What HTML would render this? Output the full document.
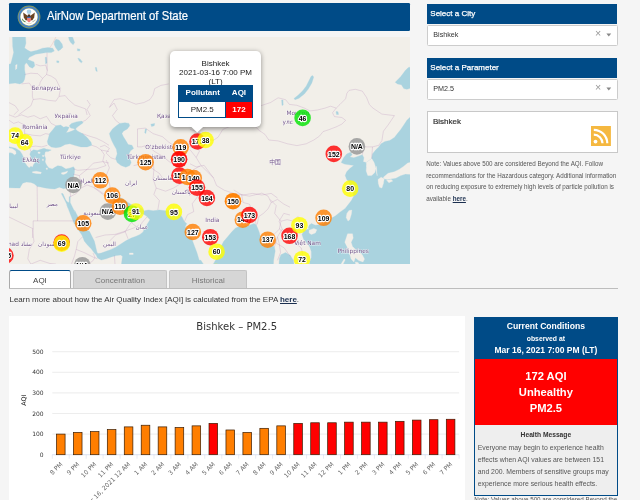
<!DOCTYPE html>
<html><head><meta charset="utf-8"><title>AirNow Department of State</title>
<style>
html,body{margin:0;padding:0;}
html{background:#f5f5f5;}
body{width:640px;height:500px;overflow:hidden;background:#f5f5f5;font-family:"Liberation Sans",sans-serif;color:#333;position:relative;filter:blur(0.35px);}
.abs{position:absolute;}
#hdr{left:9.2px;top:3px;width:400.6px;height:28.2px;background:#004b87;border-radius:1.3px;}
#hdr .t{left:37.6px;top:4.9px;font-size:12.2px;color:#fff;white-space:nowrap;line-height:16px;-webkit-text-stroke:0.2px #fff;transform:scaleX(0.93);transform-origin:0 0;}
#map{left:9px;top:37px;width:401px;height:227px;background:#f2efe9;overflow:hidden;}
.bar{left:426.8px;width:190.6px;height:20px;background:#004b87;color:#fff;font-size:8px;line-height:20px;text-indent:3.5px;-webkit-text-stroke:0.25px #fff;}
.dd{left:426.8px;width:189.6px;height:19px;background:#fff;border:0.5px solid #ccc;border-radius:1.5px;font-size:7.2px;line-height:17.4px;text-indent:5.5px;color:#333;}
.dd .x{right:16.3px;top:-1.3px;font-size:10.6px;color:#999;text-indent:0;}
.dd .a{right:6.3px;top:7.2px;width:0;height:0;border-left:2.4px solid transparent;border-right:2.4px solid transparent;border-top:2.9px solid #888;}
#rss{left:426.8px;top:111px;width:189.6px;height:40px;background:#fff;border:0.5px solid #c8c8c8;}
#rss .n{left:5.2px;top:5.4px;font-size:8px;line-height:10px;color:#333;-webkit-text-stroke:0.2px #333;}
#note{left:426.2px;top:158.4px;width:196px;font-size:6.28px;line-height:11.45px;color:#555;white-space:nowrap;}
#note b, #learn b{color:#1b2f4f;text-decoration:underline;}
.tab{top:270px;height:17.5px;font-size:8px;line-height:19.5px;text-align:center;box-sizing:border-box;}
#t1{left:9.3px;width:61.3px;background:#fff;border:0.5px solid #aaa;border-top:1px solid #004b87;border-bottom:none;border-radius:2.5px 2.5px 0 0;color:#444;height:18px;}
#t2{left:72.7px;width:94.5px;background:#d6d6d6;border:0.5px solid #c4c4c4;border-bottom:none;border-radius:2px 2px 0 0;color:#777;}
#t3{left:169.3px;width:78px;background:#d6d6d6;border:0.5px solid #c4c4c4;border-bottom:none;border-radius:2px 2px 0 0;color:#777;}
#tline{left:9.3px;top:287.7px;width:608.5px;height:0.8px;background:#bdbdbd;}
#learn{left:9.5px;top:294.5px;font-size:7.98px;line-height:10px;color:#333;white-space:nowrap;}
#chart{left:9.3px;top:316.4px;width:455.7px;height:190px;background:#fff;}
#cond{left:474.2px;top:316.5px;width:143.4px;height:179.3px;box-sizing:border-box;border:0.6px solid #004b87;background:#eee;}
#cond .h{left:0;top:0;width:100%;height:42px;background:#004b87;color:#fff;text-align:center;font-weight:bold;}
#cond .r{left:0;top:41.8px;width:100%;height:65.7px;background:#ff0000;color:#fff;text-align:center;font-weight:bold;font-size:11.2px;line-height:16.2px;}
#cond .m{left:0;top:107px;width:100%;color:#444;}
#cnote{left:474.2px;top:495.6px;font-size:6.28px;line-height:8px;color:#555;white-space:nowrap;}
</style></head><body>
<div id="hdr" class="abs"><svg class="abs" style="left:8.1px;top:2.4px" width="24" height="24" viewBox="-12 -12 24 24">
<circle r="11.4" fill="#8a9a5a"/><circle r="10.6" fill="#4580c8"/><circle r="8.9" fill="#a8b070"/><circle r="8.5" fill="#fff"/>
<circle cx="0" cy="-5.2" r="2.3" fill="#a9cfe6"/>
<path d="M-1 -1 L-5.8 -4.4 L-5.2 0.4 L-3.4 3.2 L-1.2 3.6Z" fill="#6b4423"/>
<path d="M1 -1 L5.8 -4.4 L5.2 0.4 L3.4 3.2 L1.2 3.6Z" fill="#6b4423"/>
<path d="M-1.1 -2.4 L1.1 -2.4 L1.4 0 L-1.4 0Z" fill="#4a3220"/>
<path d="M-1.9 -0.2 H1.9 V1 H-1.9Z" fill="#3b6fb5"/>
<path d="M-1.9 1 H1.9 V3 Q1.9 4.8 0 5.4 Q-1.9 4.8 -1.9 3Z" fill="#ee7b7b"/>
<path d="M-6.6 1.4 Q-5.6 3.6 -3.2 4.6 L-3.8 5.6 Q-6.6 4.6 -7.2 2Z" fill="#5f8a4a"/>
<path d="M3.2 4.6 L6.4 2.4 L6.8 3 L3.8 5.4Z" fill="#b9b9a0"/>
<path d="M-3 5.2 Q0 7.6 3 5.2 L2.4 6.6 Q0 8 -2.4 6.6Z" fill="#d8cfa8"/>
</svg><div class="t abs">AirNow Department of State</div></div>
<div id="map" class="abs"><svg class="abs" style="left:0;top:0" width="401" height="227" viewBox="0 0 401 227">
<rect width="401" height="227" fill="#f2efe9"/>
<g fill="#aad3df" stroke="#aad3df" stroke-width="0.3" stroke-linejoin="round">
<path d="M-1.6 -1.6 L16.4 -1.6 L16.9 6.2 L15.6 10.9 L18.8 13.3 L21.9 14.8 L28.1 13.3 L33.6 11.2 L39.1 10.6 L43.8 11.2 L45.3 14.1 L42.2 15.6 L37.5 15.6 L31.2 16.4 L26.6 17.2 L23.4 18.8 L20.3 20.3 L18.8 22.7 L21.1 23.4 L25.0 25.0 L25.8 28.9 L23.4 31.2 L20.3 29.7 L18.8 27.3 L17.2 25.8 L15.6 28.1 L15.6 32.8 L16.4 37.5 L15.6 42.2 L14.1 45.3 L10.9 46.9 L6.2 46.1 L-1.6 46.9Z"/>
<path d="M45.3 4.7 L46.9 2.3 L50.0 3.1 L53.1 7.0 L53.9 10.2 L51.6 12.5 L49.2 14.1 L46.9 10.9 L45.3 7.8Z"/>
<path d="M59.4 -0.8 L63.3 -0.8 L65.6 5.5 L64.1 7.8 L61.7 5.5 L60.2 3.1Z"/>
<path d="M36.2 20.3 L37.5 20.3 L38.0 25.8 L36.6 26.9Z"/>
<path d="M68.3 11.7 L71.1 12.2 L70.6 14.1 L68.4 13.8Z"/>
<path d="M68.8 21.1 L71.1 21.9 L73.4 25.0 L72.2 25.8 L70.0 23.8Z"/>
<path d="M47.7 23.8 L50.0 24.1 L49.7 25.8 L47.8 25.5Z"/>
<path d="M86.2 30.5 L87.5 30.5 L88.3 34.4 L87.0 34.1Z"/>
<path d="M39.1 102.1 L40.6 96.6 L43.8 92.7 L46.9 88.8 L51.6 88.0 L54.7 90.3 L57.0 89.6 L60.2 90.3 L58.6 93.5 L57.0 95.8 L60.2 95.0 L64.1 93.5 L66.4 91.9 L68.8 94.2 L73.4 96.6 L78.1 100.5 L82.0 105.2 L82.8 108.3 L78.1 109.9 L71.9 109.9 L65.6 108.3 L60.9 106.8 L56.2 107.5 L51.6 109.9 L46.9 110.7 L42.2 109.9 L39.1 107.5 L38.3 104.4Z"/>
<path d="M60.2 88.8 L62.5 86.4 L67.2 84.9 L72.7 84.1 L74.2 85.7 L71.1 88.0 L68.0 90.3 L66.4 92.2 L64.1 91.4 L61.7 91.1Z"/>
<path d="M35.2 113.0 L38.3 112.2 L42.2 113.0 L39.1 114.6 L35.9 114.6Z"/>
<path d="M-1.1 109.6 L6.6 111.2 L10.9 113.9 L13.1 117.2 L14.8 121.0 L15.3 124.9 L18.0 128.7 L20.2 130.9 L21.9 129.2 L23.5 130.3 L24.6 127.6 L26.2 125.4 L23.5 123.8 L22.4 121.0 L20.8 117.2 L21.9 114.5 L24.6 112.8 L28.4 113.4 L31.7 112.3 L35.0 111.2 L37.7 112.3 L36.1 115.0 L35.5 118.3 L36.6 121.6 L36.1 124.9 L37.7 128.2 L39.9 130.9 L43.2 132.0 L45.9 130.3 L48.7 128.7 L52.5 129.2 L56.9 132.0 L61.2 130.9 L64.5 129.8 L65.6 131.4 L65.4 135.8 L64.5 140.2 L63.4 144.6 L61.8 147.8 L58.5 150.8 L54.7 151.7 L50.3 150.2 L45.9 152.0 L41.6 151.7 L36.1 150.9 L31.7 150.0 L28.4 149.5 L25.2 146.8 L21.9 145.4 L17.5 145.1 L13.7 146.2 L12.0 148.9 L10.9 151.1 L6.6 150.9 L-1.1 150.6Z"/>
<path d="M52.3 156.6 L53.9 156.6 L57.0 163.6 L59.1 165.5 L60.2 165.2 L60.2 159.7 L61.2 159.7 L61.2 165.5 L64.1 171.4 L66.4 176.1 L65.6 173.3 L68.8 179.6 L73.4 185.8 L78.1 193.6 L80.4 194.2 L82.9 199.2 L85.4 204.2 L86.6 209.2 L87.9 214.9 L89.1 217.0 L87.2 218.0 L85.4 216.1 L82.2 211.8 L78.5 208.0 L75.4 204.2 L72.9 198.0 L68.8 192.1 L64.8 185.8 L61.7 178.0 L57.8 167.8 L59.4 171.4 L57.8 167.5 L56.2 163.9Z"/>
<path d="M100.4 96.6 L103.5 91.9 L107.4 88.8 L110.5 86.4 L116.0 85.7 L119.9 86.4 L120.7 88.8 L118.3 91.9 L114.4 94.2 L112.9 96.6 L114.4 99.7 L116.8 103.6 L119.1 107.5 L123.0 108.3 L124.6 111.4 L121.5 113.8 L119.9 116.9 L120.7 121.6 L122.2 125.5 L120.7 128.6 L116.8 130.2 L112.1 128.6 L108.2 125.5 L106.6 121.6 L108.2 116.9 L107.4 112.2 L105.1 108.3 L102.7 103.6 L101.2 99.7Z"/>
<path d="M141.8 87.2 L145.7 86.4 L145.2 88.8 L142.6 89.6Z"/>
<path d="M136.3 91.9 L137.6 91.9 L136.8 96.6 L135.7 95.8Z"/>
<path d="M101.9 155.0 L105.8 156.6 L111.3 160.5 L116.0 163.6 L122.2 167.5 L128.5 169.9 L133.2 171.4 L135.5 174.6 L133.2 176.9 L130.1 177.7 L126.2 180.0 L121.5 181.6 L116.8 179.2 L114.4 175.3 L112.1 170.7 L109.0 166.0 L105.1 162.1 L101.9 158.2Z"/>
<path d="M134.8 175.8 L135.5 173.8 L139.4 173.0 L144.1 173.8 L150.4 173.0 L156.6 173.8 L162.9 173.0 L169.1 174.6 L173.0 180.0 L175.4 184.7 L177.7 186.6 L176.2 189.7 L178.5 192.1 L180.8 196.8 L183.2 203.0 L185.5 209.2 L187.9 215.5 L190.2 223.3 L191.9 223.3 L194.3 227.1 L198.2 229.6 L204.4 227.1 L206.0 224.1 L209.1 220.2 L210.7 215.5 L212.2 209.2 L214.6 204.6 L218.5 199.9 L222.4 195.2 L226.3 191.3 L229.4 189.7 L234.1 189.7 L240.4 188.2 L245.1 186.6 L247.4 188.2 L249.0 192.1 L250.5 196.0 L251.3 199.9 L252.9 204.6 L257.6 206.9 L262.2 207.7 L265.4 210.0 L266.2 213.9 L265.4 218.6 L264.6 223.3 L264.1 234.2 L112.2 229.2 L112.9 223.6 L113.5 219.2 L111.6 218.0 L107.2 218.6 L102.2 219.9 L97.2 221.8 L92.2 223.0 L88.5 221.1 L87.2 218.0 L88.5 216.8 L92.2 216.1 L97.2 214.2 L102.2 212.4 L107.2 209.9 L112.2 206.8 L117.2 203.6 L122.2 201.1 L127.2 199.2 L131.0 197.4 L134.1 194.9 L135.4 191.8 L141.0 182.7 L137.1 178.8 L133.2 176.4Z"/>
<path d="M269.6 234.2 L270.4 221.8 L271.9 217.8 L276.6 215.5 L281.3 218.6 L284.4 223.3 L286.0 234.2Z"/>
<path d="M410.4 72.4 L401.0 80.2 L397.9 83.3 L394.8 88.0 L391.6 92.7 L388.5 96.6 L385.4 100.5 L380.7 103.6 L376.0 104.4 L372.1 106.8 L369.8 109.9 L366.6 113.0 L363.5 116.9 L362.7 121.6 L360.4 123.2 L357.2 125.5 L354.1 124.7 L354.9 120.8 L353.3 117.7 L349.4 119.2 L344.8 120.8 L340.8 120.0 L343.2 117.7 L341.6 115.3 L337.7 116.9 L334.6 120.8 L332.2 125.5 L335.4 127.1 L340.1 127.8 L345.5 128.6 L344.8 128.5 L340.8 131.6 L337.7 134.7 L336.2 138.6 L337.7 142.5 L340.1 144.9 L342.4 151.9 L344.8 158.9 L342.4 163.6 L339.3 167.5 L336.2 171.4 L331.3 174.9 L326.6 178.8 L322.7 181.1 L320.4 183.5 L312.6 187.4 L306.3 188.2 L302.4 186.6 L300.1 188.2 L299.3 191.3 L300.8 192.1 L296.9 192.8 L294.6 194.4 L293.0 197.5 L294.6 202.2 L297.7 206.1 L300.8 210.0 L302.4 214.7 L302.4 220.2 L300.8 224.9 L298.5 234.2 L411.0 234.2Z"/>
<path d="M386.2 45.3 L391.6 39.8 L396.3 33.6 L399.4 30.5 L410.4 28.1 L410.4 48.4 L397.9 52.3 L394.8 51.6 L392.4 47.7 L388.5 46.9Z"/>
<path d="M303.5 38.5 L304.7 40.0 L302.8 46.0 L299.3 52.0 L295.3 57.0 L290.0 61.2 L286.0 62.7 L285.0 61.5 L289.0 58.3 L293.7 53.8 L297.3 49.0 L300.3 43.0 L302.0 39.5Z"/>
<path d="M272.6 63.0 L274.0 63.0 L274.2 68.0 L273.0 68.5Z"/>
<path d="M327.0 74.5 L329.0 74.8 L329.5 77.5 L327.5 77.5Z"/>
</g>
<g fill="#f2efe9" stroke="#f2efe9" stroke-width="0.3" stroke-linejoin="round">
<path d="M3.1 -1.6 L3.4 9.4 L4.4 15.6 L2.8 21.9 L1.6 26.6 L-1.6 27.3 L-1.6 -1.6Z"/>
<path d="M6.6 28.1 L8.1 27.5 L7.8 31.2 L6.6 32.8Z"/>
<path d="M23.5 134.7 L27.3 134.2 L32.3 135.3 L31.9 136.7 L27.3 136.4 L23.5 135.8Z"/>
<path d="M52.5 135.8 L56.3 134.9 L58.7 134.1 L57.8 136.0 L54.7 137.5 L52.5 137.1Z"/>
<path d="M37.2 130.9 L38.5 130.9 L38.3 132.5 L37.2 132.3Z"/>
<path d="M33.4 118.3 L35.2 118.5 L35.0 119.6 L33.5 119.4Z"/>
<path d="M33.4 122.1 L34.5 122.2 L34.3 123.8 L33.5 123.6Z"/>
<path d="M29.0 115.0 L31.2 115.2 L31.0 116.6 L29.1 116.3Z"/>
<path d="M26.8 121.0 L28.7 122.7 L28.2 123.8 L26.2 122.2Z"/>
<path d="M-1.1 110.7 L3.3 111.8 L6.6 113.9 L7.1 116.7 L5.5 117.8 L3.3 116.1 L1.1 115.6 L-1.1 116.1Z"/>
<path d="M120.4 216.1 L124.1 216.0 L124.2 217.4 L120.5 217.5Z"/>
<path d="M362.7 121.6 L365.1 125.5 L366.6 130.2 L367.4 134.9 L368.2 138.8 L367.4 129.2 L365.8 135.5 L362.7 138.6 L358.8 138.6 L357.2 133.9 L357.6 127.7 L358.0 130.2 L357.2 125.5 L360.4 123.2Z"/>
<path d="M369.0 142.5 L372.1 140.2 L375.2 141.8 L374.4 146.4 L372.9 151.1 L370.5 150.3 L369.4 146.4Z"/>
<path d="M374.4 140.2 L379.1 136.3 L385.4 134.7 L390.1 132.4 L394.8 129.2 L398.7 126.1 L410.4 123.0 L410.4 137.8 L396.3 137.1 L391.6 138.6 L386.9 141.0 L382.2 141.8 L378.3 142.5 L375.2 141.8Z"/>
<path d="M377.6 143.3 L382.2 142.5 L383.8 144.1 L379.9 145.7Z"/>
<path d="M340.0 173.5 L342.8 173.1 L342.4 177.1 L340.7 182.7 L339.0 184.1 L337.2 180.6 L337.9 176.4Z"/>
<path d="M300.1 193.2 L304.8 191.4 L307.9 192.8 L306.3 196.0 L302.4 197.5 L300.1 196.0Z"/>
<path d="M338.6 196.8 L343.5 196.8 L344.2 201.0 L342.1 205.2 L343.5 209.4 L345.6 211.5 L353.3 217.8 L355.5 222.1 L354.0 224.9 L349.8 223.5 L346.3 220.7 L344.9 224.9 L342.1 222.1 L340.0 215.0 L337.9 209.4 L335.8 205.2 L337.2 201.0Z"/>
<path d="M330.8 229.1 L335.1 222.1 L336.2 222.8 L333.0 229.1Z"/>
<path d="M346.3 224.9 L349.1 225.6 L351.2 229.1 L347.0 229.1Z"/>
</g>
<g fill="none" stroke="#a46aa8" stroke-opacity="0.42" stroke-width="0.5" stroke-linejoin="round">
<path d="M15.6 37.5 L21.9 36.2 L28.9 36.7 L33.6 41.4 L31.2 45.3 L30.5 48.4"/>
<path d="M26.6 27.3 L31.2 28.9 L36.7 28.1 L38.3 33.6 L37.5 37.5 L33.6 41.4"/>
<path d="M37.5 37.5 L42.2 39.1 L46.9 42.2 L49.2 46.9 L51.6 51.6 L50.0 59.4 L56.2 58.6 L59.4 62.5 L65.6 68.0 L76.6 71.9 L78.1 78.0"/>
<path d="M30.5 48.4 L23.4 52.3 L23.4 59.4 L24.2 62.5 L31.2 61.7 L39.1 63.3 L46.9 64.1 L50.0 59.4"/>
<path d="M12.5 46.9 L20.3 46.1 L21.9 48.4 L23.4 52.3"/>
<path d="M38.0 15.6 L38.0 25.8 L38.3 33.6"/>
<path d="M24.2 62.5 L21.9 68.8 L15.6 73.4 L9.4 78.0"/>
<path d="M0.0 65.6 L6.2 68.8 L9.4 73.4 L4.7 78.0"/>
<path stroke="#d88"  d="M46.9 0.0 L43.8 6.2 L40.9 10.6"/>
<path d="M0.0 77.8 L6.2 80.2 L12.5 77.8 L18.8 80.2 L25.0 78.6 L31.2 81.8 L37.5 79.4 L42.2 86.4 L46.9 88.8"/>
<path d="M15.6 96.6 L23.4 98.2 L31.2 98.9 L36.7 96.6 L40.3 97.4"/>
<path d="M20.3 109.9 L26.6 109.1 L32.8 109.9 L38.3 108.3"/>
<path d="M0.0 83.3 L4.7 86.4 L9.4 84.9 L15.6 88.0 L15.6 96.6 L12.5 102.1 L15.6 108.3 L20.3 109.9 L21.9 114.6"/>
<path d="M0.0 94.2 L6.2 96.6 L12.5 102.1"/>
<path d="M78.1 63.0 L81.2 67.7 L78.1 72.4 L81.2 78.6 L76.6 83.3 L73.4 84.6"/>
<path d="M73.4 96.6 L79.7 98.9 L87.5 101.3 L93.8 104.4 L100.0 108.3"/>
<path d="M82.8 108.3 L87.5 109.9 L92.2 113.0 L95.3 117.7 L93.8 123.9 L96.9 128.6 L87.5 131.8 L78.1 132.5 L68.8 133.3 L64.1 131.8"/>
<path d="M92.2 113.0 L100.0 114.6"/>
<path d="M100.4 70.3 L105.1 62.5 L111.3 61.7 L119.1 64.1 L126.9 67.2 L134.8 65.6 L141.0 62.5 L144.1 57.8 L145.7 51.6 L151.9 48.4 L159.8 46.9"/>
<path d="M100.4 70.3 L105.1 66.1 L108.2 72.4 L103.5 78.6 L106.6 83.3 L110.5 86.4"/>
<path d="M128.5 91.9 L128.5 109.9 L132.4 109.9"/>
<path d="M128.5 91.9 L136.3 91.1 L144.1 96.6 L153.5 99.7 L159.8 105.2 L164.4 108.3 L172.2 105.2 L178.5 108.3 L184.8 102.1"/>
<path d="M132.4 109.9 L137.9 108.3 L145.7 114.6 L153.5 119.2 L161.3 125.5 L166.0 128.6 L172.2 130.2"/>
<path d="M124.6 128.6 L131.6 127.1 L139.4 128.6 L145.7 133.3 L150.4 136.4 L153.5 141.0"/>
<path d="M91.0 109.9 L95.7 108.3 L100.4 111.4 L97.2 116.1 L101.9 120.8 L106.6 122.4"/>
<path d="M178.5 108.3 L184.8 111.4 L191.0 109.9"/>
<path d="M144.1 123.0 L144.9 132.4 L144.1 141.8 L147.2 151.1 L144.9 157.4 L150.4 163.6 L148.8 173.0"/>
<path d="M147.2 151.1 L156.6 154.2 L164.4 151.1 L172.2 146.4 L178.5 138.6 L184.8 132.4 L191.0 129.2"/>
<path d="M175.4 184.7 L178.5 177.7 L184.8 174.6 L183.2 166.8 L187.9 160.5 L191.0 154.2"/>
<path d="M101.9 155.0 L100.4 146.4 L97.2 138.6 L100.4 130.8 L97.2 123.0"/>
<path d="M84.8 150.3 L91.0 154.2 L97.2 158.9 L102.7 159.7"/>
<path d="M122.2 185.5 L130.1 191.8 L133.2 185.5 L137.9 180.0"/>
<path d="M122.2 185.5 L116.0 194.9 L106.6 198.0 L100.4 204.2"/>
<path d="M28.1 148.8 L28.6 183.9"/>
<path d="M28.6 183.9 L65.6 183.9"/>
<path d="M28.6 183.9 L24.2 183.9 L24.2 191.8 L0.0 180.0"/>
<path d="M24.2 191.8 L23.4 201.0"/>
<path d="M60.2 148.0 L61.7 159.7"/>
<path d="M64.1 137.1 L70.3 138.6 L78.1 132.4 L84.4 126.1 L93.8 124.6 L100.0 126.1"/>
<path d="M61.2 159.7 L67.2 156.6 L71.9 151.1 L78.1 148.0 L84.4 150.3 L93.8 157.4"/>
<path d="M70.3 138.6 L71.9 144.9 L67.2 148.0 L61.7 148.8"/>
<path d="M23.4 192.1 L25.0 204.6 L20.3 212.4 L18.8 221.8 L21.9 227.1"/>
<path d="M73.4 199.9 L68.8 204.6 L67.2 212.4 L65.6 218.6 L62.5 227.1"/>
<path d="M67.2 212.4 L75.0 215.5 L84.4 220.2 L88.3 221.8"/>
<path d="M21.9 227.1 L31.2 223.3 L40.6 226.4 L46.9 227.1"/>
<path d="M86.6 200.5 L96.0 198.0 L106.0 197.4 L116.0 194.2 L126.0 190.5 L129.8 188.0"/>
<path d="M116.0 194.2 L119.1 201.8"/>
<path d="M105.4 218.6 L106.0 227.0"/>
<path d="M84.1 216.1 L86.0 220.5 L83.5 224.2 L78.5 227.0"/>
<path d="M181.0 92.4 L190.4 95.5 L195.1 100.2 L204.4 103.3 L209.1 100.2 L213.8 92.4 L221.6 89.2 L227.9 86.1 L234.1 83.0"/>
<path d="M181.0 112.7 L187.2 120.5 L191.9 128.3 L198.2 134.6 L204.4 140.8 L207.6 148.6 L215.4 153.3 L224.8 156.4 L234.1 158.0 L243.5 156.4 L252.9 158.0 L262.2 156.4 L268.5 161.0"/>
<path d="M181.0 126.8 L187.2 129.9 L195.1 128.3 L204.4 140.8"/>
<path d="M187.2 120.5 L190.4 114.2 L187.2 108.0 L191.9 103.3 L195.1 100.2"/>
<path d="M224.8 153.0 L232.6 157.7 L240.4 159.2 L246.6 157.7 L252.9 156.1 L259.1 159.2 L262.2 165.5 L259.1 171.8 L254.4 176.4 L249.8 179.6 L248.2 187.4"/>
<path d="M232.6 157.7 L234.1 165.5 L240.4 167.1 L243.5 173.3 L247.4 188.2"/>
<path d="M262.2 165.5 L268.5 162.4 L274.8 167.1 L281.0 170.2"/>
<path d="M265.4 210.0 L268.5 199.9 L273.2 192.1 L270.1 184.2 L274.8 176.4 L281.0 178.0"/>
<path d="M273.2 192.1 L277.9 196.8 L281.0 204.6"/>
<path d="M268.5 223.3 L271.6 215.5 L270.1 206.1 L268.5 199.9"/>
<path d="M363.5 70.8 L372.9 77.1 L385.4 78.6 L379.1 88.0 L374.4 94.2 L372.9 103.6 L369.8 108.3 L363.5 109.9 L355.7 109.9"/>
<path d="M355.7 109.9 L354.1 114.6 L353.3 117.7"/>
<path d="M363.5 109.9 L362.7 121.6"/>
<path d="M229.8 74.9 L241.0 71.1 L253.2 68.3 L261.6 65.5 L269.1 60.8 L276.6 62.7 L280.4 67.4 L287.9 68.3 L295.4 71.1 L301.0 73.9 L308.5 73.0 L316.0 71.1 L321.6 69.2 L327.2 71.1"/>
<path d="M327.2 71.1 L323.5 75.8 L325.4 79.6 L332.9 80.5 L336.6 83.3 L332.9 87.1 L327.2 89.9 L319.8 92.7 L314.1 94.6 L310.4 99.2 L304.8 103.0 L297.2 106.8 L287.9 108.6 L278.5 106.8 L269.1 103.9 L259.8 103.0 L256.0 97.4 L250.4 93.6 L246.6 89.9 L241.0 87.1 L233.5 83.3"/>
<path d="M327.2 71.1 L331.0 67.4 L336.6 61.8"/>
<path d="M336.6 61.8 L337.9 56.3 L340.0 53.4 L346.3 52.3 L353.3 54.1 L357.6 60.5 L360.4 67.5 L363.5 70.8"/>
<path d="M261.0 162.4 L267.2 168.6 L265.7 176.4 L271.9 184.2 L278.2 182.7 L284.4 184.2 L289.1 179.6 L294.6 194.4"/>
<path d="M271.9 184.2 L270.4 192.1 L276.6 196.8 L284.4 204.6 L292.2 210.8 L293.8 217.1 L289.1 220.2"/>
<path d="M270.4 192.1 L264.1 198.3 L267.2 206.1 L275.1 210.8 L281.3 219.4"/>
</g>
<g font-family="DejaVu Sans, Noto Sans CJK SC, sans-serif" font-size="5.8" fill="#6c4c84" fill-opacity="0.95" stroke="#fff" stroke-opacity="0.7" stroke-width="1" paint-order="stroke" stroke-linejoin="round">
<text x="36.9" y="53.3" text-anchor="middle">Беларусь</text>
<text x="57.2" y="80.8" text-anchor="middle">Україна</text>
<text x="26.0" y="91.6" text-anchor="middle">România</text>
<text x="22.1" y="125.2" text-anchor="middle">Ελλάς</text>
<text x="61.5" y="121.9" text-anchor="middle">Türkiye</text>
<text x="148.0" y="80.8" text-anchor="start">Қазақстан</text>
<text x="136.3" y="111.8" text-anchor="start">O'zbekiston</text>
<text x="117.6" y="122.4" text-anchor="start">Türkmenistan</text>
<text x="122.2" y="148.3" text-anchor="middle">ایران</text>
<text x="77.0" y="145.9" text-anchor="middle">العراق</text>
<text x="85.2" y="178.0" text-anchor="middle">السعودية</text>
<text x="43.3" y="169.1" text-anchor="middle">مصر</text>
<text x="4.7" y="170.7" text-anchor="middle">ليبيا</text>
<text x="8.0" y="208.8" text-anchor="middle">Tchad تشاد</text>
<text x="39.0" y="208.8" text-anchor="middle">السودان</text>
<text x="100.4" y="208.7" text-anchor="middle">اليمن</text>
<text x="132.9" y="191.8" text-anchor="middle">عمان</text>
<text x="155.8" y="143.3" text-anchor="middle">افغانستان</text>
<text x="172.2" y="156.9" text-anchor="middle">پاکستان</text>
<text x="203.3" y="184.9" text-anchor="middle">India</text>
<text x="266.0" y="127.4" text-anchor="middle">中国</text>
<text x="277.4" y="77.7" text-anchor="start">Монгол</text>
<text x="273.6" y="87.1" text-anchor="start">улс</text>
<text x="298.5" y="207.7" text-anchor="middle">Việt Nam</text>
<text x="344.2" y="216.2" text-anchor="middle">Philippines</text>
</g>
<g font-family="Liberation Sans, sans-serif" font-weight="bold" font-size="7.7" text-anchor="middle" stroke-linejoin="round">
<circle cx="6.2" cy="98.6" r="8.3" fill="#ffff00" fill-opacity="0.8"/>
<text transform="translate(6.2,101.3) scale(0.9,1)" fill="#000" stroke="#fff" stroke-width="2.3" paint-order="stroke">74</text>
<circle cx="15.6" cy="105.2" r="8.3" fill="#ffff00" fill-opacity="0.8"/>
<text transform="translate(15.6,107.9) scale(0.9,1)" fill="#000" stroke="#fff" stroke-width="2.3" paint-order="stroke">64</text>
<circle cx="64.4" cy="148.0" r="8.3" fill="#999999" fill-opacity="0.85"/>
<text transform="translate(64.4,150.8) scale(0.9,1)" fill="#000" stroke="#fff" stroke-width="2.3" paint-order="stroke">N/A</text>
<circle cx="91.4" cy="143.3" r="8.3" fill="#ff7e00" fill-opacity="0.8"/>
<text transform="translate(91.4,146.1) scale(0.9,1)" fill="#000" stroke="#fff" stroke-width="2.3" paint-order="stroke">112</text>
<circle cx="98.8" cy="174.6" r="8.3" fill="#999999" fill-opacity="0.85"/>
<text transform="translate(98.8,177.3) scale(0.9,1)" fill="#000" stroke="#fff" stroke-width="2.3" paint-order="stroke">N/A</text>
<circle cx="103.2" cy="158.6" r="8.3" fill="#ff7e00" fill-opacity="0.8"/>
<text transform="translate(103.2,161.3) scale(0.9,1)" fill="#000" stroke="#fff" stroke-width="2.3" paint-order="stroke">106</text>
<circle cx="111.0" cy="169.6" r="8.3" fill="#ff7e00" fill-opacity="0.8"/>
<text transform="translate(111.0,172.3) scale(0.9,1)" fill="#000" stroke="#fff" stroke-width="2.3" paint-order="stroke">110</text>
<circle cx="123.0" cy="176.9" r="8.3" fill="#00e400" fill-opacity="0.8"/>
<text transform="translate(123.0,179.7) scale(0.9,1)" fill="#000" stroke="#fff" stroke-width="2.3" paint-order="stroke">27</text>
<circle cx="126.8" cy="174.6" r="8.3" fill="#ffff00" fill-opacity="0.75"/>
<text transform="translate(126.8,177.3) scale(0.9,1)" fill="#000" stroke="#fff" stroke-width="2.3" paint-order="stroke">91</text>
<circle cx="74.2" cy="186.3" r="8.3" fill="#ff7e00" fill-opacity="0.8"/>
<text transform="translate(74.2,189.1) scale(0.9,1)" fill="#000" stroke="#fff" stroke-width="2.3" paint-order="stroke">105</text>
<circle cx="52.7" cy="205.6" r="8.3" fill="#ff0000" fill-opacity="0.85"/>
<circle cx="52.7" cy="206.6" r="8.3" fill="#ffff00" fill-opacity="0.8"/>
<text transform="translate(52.7,209.3) scale(0.9,1)" fill="#000" stroke="#fff" stroke-width="2.3" paint-order="stroke">69</text>
<circle cx="-3.6" cy="218.5" r="8.3" fill="#ff0000" fill-opacity="0.8"/>
<text transform="translate(-3.6,221.2) scale(0.9,1)" fill="#000" stroke="#fff" stroke-width="2.3" paint-order="stroke">155</text>
<circle cx="73.3" cy="228.2" r="8.3" fill="#999999" fill-opacity="0.85"/>
<text transform="translate(73.3,230.9) scale(0.9,1)" fill="#000" stroke="#fff" stroke-width="2.3" paint-order="stroke">N/A</text>
<circle cx="136.6" cy="125.2" r="8.3" fill="#ff7e00" fill-opacity="0.8"/>
<text transform="translate(136.6,127.9) scale(0.9,1)" fill="#000" stroke="#fff" stroke-width="2.3" paint-order="stroke">125</text>
<circle cx="171.7" cy="110.3" r="8.3" fill="#ff7e00" fill-opacity="0.8"/>
<text transform="translate(171.7,113.1) scale(0.9,1)" fill="#000" stroke="#fff" stroke-width="2.3" paint-order="stroke">119</text>
<circle cx="170.1" cy="122.3" r="8.3" fill="#ff0000" fill-opacity="0.9"/>
<text transform="translate(170.1,125.1) scale(0.9,1)" fill="#000" stroke="#fff" stroke-width="2.3" paint-order="stroke">190</text>
<circle cx="188.5" cy="104.5" r="8.3" fill="#ff0000" fill-opacity="0.8"/>
<text transform="translate(188.5,107.2) scale(0.9,1)" fill="#000" stroke="#fff" stroke-width="2.3" paint-order="stroke">172</text>
<circle cx="196.6" cy="103.0" r="8.3" fill="#ffff00" fill-opacity="0.8"/>
<text transform="translate(196.6,105.8) scale(0.9,1)" fill="#000" stroke="#fff" stroke-width="2.3" paint-order="stroke">38</text>
<circle cx="170.4" cy="138.6" r="8.3" fill="#ff0000" fill-opacity="0.8"/>
<text transform="translate(170.4,141.3) scale(0.9,1)" fill="#000" stroke="#fff" stroke-width="2.3" paint-order="stroke">157</text>
<circle cx="178.5" cy="140.0" r="8.3" fill="#ff7e00" fill-opacity="0.8"/>
<text transform="translate(178.5,142.8) scale(0.9,1)" fill="#000" stroke="#fff" stroke-width="2.3" paint-order="stroke">135</text>
<circle cx="184.8" cy="141.0" r="8.3" fill="#ff7e00" fill-opacity="0.8"/>
<text transform="translate(184.8,143.8) scale(0.9,1)" fill="#000" stroke="#fff" stroke-width="2.3" paint-order="stroke">140</text>
<circle cx="188.0" cy="150.6" r="8.3" fill="#ff0000" fill-opacity="0.8"/>
<text transform="translate(188.0,153.3) scale(0.9,1)" fill="#000" stroke="#fff" stroke-width="2.3" paint-order="stroke">155</text>
<circle cx="197.9" cy="161.0" r="8.3" fill="#ff0000" fill-opacity="0.8"/>
<text transform="translate(197.9,163.8) scale(0.9,1)" fill="#000" stroke="#fff" stroke-width="2.3" paint-order="stroke">164</text>
<circle cx="224.0" cy="164.2" r="8.3" fill="#ff7e00" fill-opacity="0.95"/>
<text transform="translate(224.0,167.0) scale(0.9,1)" fill="#000" stroke="#fff" stroke-width="2.3" paint-order="stroke">150</text>
<circle cx="233.8" cy="182.7" r="8.3" fill="#ff7e00" fill-opacity="0.8"/>
<text transform="translate(233.8,185.4) scale(0.9,1)" fill="#000" stroke="#fff" stroke-width="2.3" paint-order="stroke">143</text>
<circle cx="240.4" cy="178.0" r="8.3" fill="#ff0000" fill-opacity="0.8"/>
<text transform="translate(240.4,180.8) scale(0.9,1)" fill="#000" stroke="#fff" stroke-width="2.3" paint-order="stroke">173</text>
<circle cx="164.9" cy="174.9" r="8.3" fill="#ffff00" fill-opacity="0.8"/>
<text transform="translate(164.9,177.7) scale(0.9,1)" fill="#000" stroke="#fff" stroke-width="2.3" paint-order="stroke">95</text>
<circle cx="183.8" cy="195.0" r="8.3" fill="#ff7e00" fill-opacity="0.8"/>
<text transform="translate(183.8,197.8) scale(0.9,1)" fill="#000" stroke="#fff" stroke-width="2.3" paint-order="stroke">127</text>
<circle cx="201.3" cy="200.2" r="8.3" fill="#ff0000" fill-opacity="0.8"/>
<text transform="translate(201.3,202.9) scale(0.9,1)" fill="#000" stroke="#fff" stroke-width="2.3" paint-order="stroke">153</text>
<circle cx="207.6" cy="214.7" r="8.3" fill="#ffff00" fill-opacity="0.8"/>
<text transform="translate(207.6,217.4) scale(0.9,1)" fill="#000" stroke="#fff" stroke-width="2.3" paint-order="stroke">60</text>
<circle cx="207.0" cy="235.0" r="8.3" fill="#ffff00" fill-opacity="0.8"/>
<circle cx="258.7" cy="202.7" r="8.3" fill="#ff7e00" fill-opacity="0.8"/>
<text transform="translate(258.7,205.4) scale(0.9,1)" fill="#000" stroke="#fff" stroke-width="2.3" paint-order="stroke">137</text>
<circle cx="280.5" cy="198.8" r="8.3" fill="#ff0000" fill-opacity="0.8"/>
<text transform="translate(280.5,201.6) scale(0.9,1)" fill="#000" stroke="#fff" stroke-width="2.3" paint-order="stroke">168</text>
<circle cx="290.4" cy="188.2" r="8.3" fill="#ffff00" fill-opacity="0.8"/>
<text transform="translate(290.4,190.9) scale(0.9,1)" fill="#000" stroke="#fff" stroke-width="2.3" paint-order="stroke">93</text>
<circle cx="293.0" cy="222.2" r="8.3" fill="#ffff00" fill-opacity="0.8"/>
<text transform="translate(293.0,224.9) scale(0.9,1)" fill="#000" stroke="#fff" stroke-width="2.3" paint-order="stroke">72</text>
<circle cx="314.6" cy="180.8" r="8.3" fill="#ff7e00" fill-opacity="0.8"/>
<text transform="translate(314.6,183.6) scale(0.9,1)" fill="#000" stroke="#fff" stroke-width="2.3" paint-order="stroke">109</text>
<circle cx="341.2" cy="151.6" r="8.3" fill="#ffff00" fill-opacity="0.8"/>
<text transform="translate(341.2,154.3) scale(0.9,1)" fill="#000" stroke="#fff" stroke-width="2.3" paint-order="stroke">80</text>
<circle cx="324.8" cy="116.9" r="8.3" fill="#ff0000" fill-opacity="0.8"/>
<text transform="translate(324.8,119.7) scale(0.9,1)" fill="#000" stroke="#fff" stroke-width="2.3" paint-order="stroke">152</text>
<circle cx="347.9" cy="109.4" r="8.3" fill="#999999" fill-opacity="0.85"/>
<text transform="translate(347.9,112.2) scale(0.9,1)" fill="#000" stroke="#fff" stroke-width="2.3" paint-order="stroke">N/A</text>
<circle cx="293.6" cy="80.9" r="8.3" fill="#00e400" fill-opacity="0.8"/>
<text transform="translate(293.6,83.7) scale(0.9,1)" fill="#000" stroke="#fff" stroke-width="2.3" paint-order="stroke">46</text>
</g>
</svg>
<div id="pop" class="abs" style="left:160.75px;top:13.7px;width:91.65px;height:76.4px;background:#fff;border-radius:4.8px;box-shadow:0 1.2px 5.6px rgba(0,0,0,.4);font-size:8px;color:#222;text-align:center;">
<div class="abs" style="left:0;width:100%;top:9.8px;line-height:8.6px">Bishkek<br>2021-03-16 7:00 PM<br>(LT)</div>
<div class="abs" style="left:8.2px;top:34.6px;width:74.6px;height:33px;box-sizing:border-box;border:0.6px solid #004b87;background:#fff">
<div class="abs" style="left:0;top:0;width:100%;height:16px;background:#004b87;color:#fff;font-weight:bold"><span class="abs" style="left:0;width:47.5px;top:0;line-height:14px">Pollutant</span><span class="abs" style="left:47.5px;right:0;top:0;line-height:14px">AQI</span></div>
<div class="abs" style="left:0;top:16px;width:47.5px;height:16px;line-height:15.2px;border-right:0.6px solid #004b87;box-sizing:border-box">PM2.5</div>
<div class="abs" style="left:47.5px;right:0;top:16px;height:16px;line-height:15.2px;background:#ff0000;color:#fff;font-weight:bold">172</div>
</div></div>
<svg class="abs" style="left:178px;top:86px;overflow:visible" width="22" height="14" viewBox="178 86 22 14"><path d="M182.4 90 L194.1 90 L188.2 95.5Z" fill="#fff" style="filter:drop-shadow(0 1px 2px rgba(0,0,0,.35))"/></svg>
<div class="abs" style="left:181px;top:85px;width:15px;height:5px;background:#fff"></div></div>
<div class="bar abs" style="top:4px">Select a City</div>
<div class="dd abs" style="top:25px">Bishkek<span class="x abs">×</span><svg class="abs" style="right:2.2px;top:2.9px" width="12" height="12" viewBox="0 0 12 12"><path d="M3.4 4.5H8.2L5.8 7.5Z" fill="#888"/></svg></div>
<div class="bar abs" style="top:58px">Select a Parameter</div>
<div class="dd abs" style="top:79px">PM2.5<span class="x abs">×</span><svg class="abs" style="right:2.2px;top:2.9px" width="12" height="12" viewBox="0 0 12 12"><path d="M3.4 4.5H8.2L5.8 7.5Z" fill="#888"/></svg></div>
<div id="rss" class="abs"><div class="n abs">Bishkek</div>
<svg class="abs" style="left:163.7px;top:13.8px" width="20" height="20" viewBox="0 0 20 20"><rect width="19.9" height="20" fill="#f5b840"/><circle cx="4.5" cy="15.6" r="1.9" fill="#fff"/><path d="M2.8 8.6A8.9 8.9 0 0 1 11.5 17.3" fill="none" stroke="#fff" stroke-width="2.2"/><path d="M2.8 3.8A13.7 13.7 0 0 1 16.3 17.3" fill="none" stroke="#fff" stroke-width="2.2"/></svg>
</div>
<div id="note" class="abs">Note: Values above 500 are considered Beyond the AQI. Follow<br>recommendations for the Hazardous category. Additional information<br>on reducing exposure to extremely high levels of particle pollution is<br>available <b>here</b>.</div>
<div id="t1" class="tab abs">AQI</div><div id="t2" class="tab abs">Concentration</div><div id="t3" class="tab abs">Historical</div>
<div id="tline" class="abs"></div>
<div id="learn" class="abs">Learn more about how the Air Quality Index [AQI] is calculated from the EPA <b>here</b>.</div>
<div id="chart" class="abs"><svg class="abs" style="left:0;top:0" width="455.7" height="190" viewBox="9.3 316.4 455.7 190" font-family="DejaVu Sans, sans-serif">
<text x="237" y="330" text-anchor="middle" font-size="10.5" fill="#333" textLength="80.8" lengthAdjust="spacingAndGlyphs">Bishkek – PM2.5</text>
<line x1="52.6" x2="459.4" y1="455.1" y2="455.1" stroke="#ccd6eb" stroke-width="0.7"/>
<text x="44" y="457.3" text-anchor="end" font-size="6" fill="#333">0</text>
<line x1="52.6" x2="459.4" y1="434.5" y2="434.5" stroke="#e4e4e4" stroke-width="0.7"/>
<text x="44" y="436.7" text-anchor="end" font-size="6" fill="#333">100</text>
<line x1="52.6" x2="459.4" y1="413.9" y2="413.9" stroke="#e4e4e4" stroke-width="0.7"/>
<text x="44" y="416.1" text-anchor="end" font-size="6" fill="#333">200</text>
<line x1="52.6" x2="459.4" y1="393.3" y2="393.3" stroke="#e4e4e4" stroke-width="0.7"/>
<text x="44" y="395.5" text-anchor="end" font-size="6" fill="#333">300</text>
<line x1="52.6" x2="459.4" y1="372.7" y2="372.7" stroke="#e4e4e4" stroke-width="0.7"/>
<text x="44" y="374.9" text-anchor="end" font-size="6" fill="#333">400</text>
<line x1="52.6" x2="459.4" y1="352.1" y2="352.1" stroke="#e4e4e4" stroke-width="0.7"/>
<text x="44" y="354.3" text-anchor="end" font-size="6" fill="#333">500</text>
<line x1="52.6" x2="52.6" y1="455.1" y2="459.1" stroke="#ccd6eb" stroke-width="0.5"/>
<line x1="69.5" x2="69.5" y1="455.1" y2="459.1" stroke="#ccd6eb" stroke-width="0.5"/>
<line x1="86.5" x2="86.5" y1="455.1" y2="459.1" stroke="#ccd6eb" stroke-width="0.5"/>
<line x1="103.4" x2="103.4" y1="455.1" y2="459.1" stroke="#ccd6eb" stroke-width="0.5"/>
<line x1="120.4" x2="120.4" y1="455.1" y2="459.1" stroke="#ccd6eb" stroke-width="0.5"/>
<line x1="137.3" x2="137.3" y1="455.1" y2="459.1" stroke="#ccd6eb" stroke-width="0.5"/>
<line x1="154.3" x2="154.3" y1="455.1" y2="459.1" stroke="#ccd6eb" stroke-width="0.5"/>
<line x1="171.2" x2="171.2" y1="455.1" y2="459.1" stroke="#ccd6eb" stroke-width="0.5"/>
<line x1="188.2" x2="188.2" y1="455.1" y2="459.1" stroke="#ccd6eb" stroke-width="0.5"/>
<line x1="205.1" x2="205.1" y1="455.1" y2="459.1" stroke="#ccd6eb" stroke-width="0.5"/>
<line x1="222.1" x2="222.1" y1="455.1" y2="459.1" stroke="#ccd6eb" stroke-width="0.5"/>
<line x1="239.0" x2="239.0" y1="455.1" y2="459.1" stroke="#ccd6eb" stroke-width="0.5"/>
<line x1="256.0" x2="256.0" y1="455.1" y2="459.1" stroke="#ccd6eb" stroke-width="0.5"/>
<line x1="272.9" x2="272.9" y1="455.1" y2="459.1" stroke="#ccd6eb" stroke-width="0.5"/>
<line x1="289.9" x2="289.9" y1="455.1" y2="459.1" stroke="#ccd6eb" stroke-width="0.5"/>
<line x1="306.9" x2="306.9" y1="455.1" y2="459.1" stroke="#ccd6eb" stroke-width="0.5"/>
<line x1="323.8" x2="323.8" y1="455.1" y2="459.1" stroke="#ccd6eb" stroke-width="0.5"/>
<line x1="340.8" x2="340.8" y1="455.1" y2="459.1" stroke="#ccd6eb" stroke-width="0.5"/>
<line x1="357.7" x2="357.7" y1="455.1" y2="459.1" stroke="#ccd6eb" stroke-width="0.5"/>
<line x1="374.7" x2="374.7" y1="455.1" y2="459.1" stroke="#ccd6eb" stroke-width="0.5"/>
<line x1="391.6" x2="391.6" y1="455.1" y2="459.1" stroke="#ccd6eb" stroke-width="0.5"/>
<line x1="408.6" x2="408.6" y1="455.1" y2="459.1" stroke="#ccd6eb" stroke-width="0.5"/>
<line x1="425.5" x2="425.5" y1="455.1" y2="459.1" stroke="#ccd6eb" stroke-width="0.5"/>
<line x1="442.4" x2="442.4" y1="455.1" y2="459.1" stroke="#ccd6eb" stroke-width="0.5"/>
<line x1="459.4" x2="459.4" y1="455.1" y2="459.1" stroke="#ccd6eb" stroke-width="0.5"/>
<text transform="translate(26.4,400.5) rotate(-90)" text-anchor="middle" font-size="6.4" fill="#222">AQI</text>
<rect x="56.78" y="434.50" width="8.60" height="20.60" fill="#ff7e00" stroke="#3a1c00" stroke-width="0.7"/>
<text transform="translate(63.3,465.0) rotate(-45)" text-anchor="end" font-size="6.2" fill="#666">8 PM</text>
<rect x="73.73" y="432.85" width="8.60" height="22.25" fill="#ff7e00" stroke="#3a1c00" stroke-width="0.7"/>
<text transform="translate(80.2,465.0) rotate(-45)" text-anchor="end" font-size="6.2" fill="#666">9 PM</text>
<rect x="90.67" y="432.03" width="8.60" height="23.07" fill="#ff7e00" stroke="#3a1c00" stroke-width="0.7"/>
<text transform="translate(97.2,465.0) rotate(-45)" text-anchor="end" font-size="6.2" fill="#666">10 PM</text>
<rect x="107.62" y="429.97" width="8.60" height="25.13" fill="#ff7e00" stroke="#3a1c00" stroke-width="0.7"/>
<text transform="translate(114.1,465.0) rotate(-45)" text-anchor="end" font-size="6.2" fill="#666">11 PM</text>
<rect x="124.58" y="427.29" width="8.60" height="27.81" fill="#ff7e00" stroke="#3a1c00" stroke-width="0.7"/>
<text transform="translate(131.1,465.0) rotate(-45)" text-anchor="end" font-size="6.2" fill="#666">Mar 16, 2021 12 AM</text>
<rect x="141.52" y="425.64" width="8.60" height="29.46" fill="#ff7e00" stroke="#3a1c00" stroke-width="0.7"/>
<text transform="translate(148.0,465.0) rotate(-45)" text-anchor="end" font-size="6.2" fill="#666">1 AM</text>
<rect x="158.47" y="427.29" width="8.60" height="27.81" fill="#ff7e00" stroke="#3a1c00" stroke-width="0.7"/>
<text transform="translate(165.0,465.0) rotate(-45)" text-anchor="end" font-size="6.2" fill="#666">2 AM</text>
<rect x="175.42" y="427.91" width="8.60" height="27.19" fill="#ff7e00" stroke="#3a1c00" stroke-width="0.7"/>
<text transform="translate(181.9,465.0) rotate(-45)" text-anchor="end" font-size="6.2" fill="#666">3 AM</text>
<rect x="192.37" y="426.26" width="8.60" height="28.84" fill="#ff7e00" stroke="#3a1c00" stroke-width="0.7"/>
<text transform="translate(198.9,465.0) rotate(-45)" text-anchor="end" font-size="6.2" fill="#666">4 AM</text>
<rect x="209.32" y="423.79" width="8.60" height="31.31" fill="#ff0000" stroke="#3a1c00" stroke-width="0.7"/>
<text transform="translate(215.8,465.0) rotate(-45)" text-anchor="end" font-size="6.2" fill="#666">5 AM</text>
<rect x="226.27" y="430.38" width="8.60" height="24.72" fill="#ff7e00" stroke="#3a1c00" stroke-width="0.7"/>
<text transform="translate(232.8,465.0) rotate(-45)" text-anchor="end" font-size="6.2" fill="#666">6 AM</text>
<rect x="243.22" y="432.85" width="8.60" height="22.25" fill="#ff7e00" stroke="#3a1c00" stroke-width="0.7"/>
<text transform="translate(249.7,465.0) rotate(-45)" text-anchor="end" font-size="6.2" fill="#666">7 AM</text>
<rect x="260.18" y="428.73" width="8.60" height="26.37" fill="#ff7e00" stroke="#3a1c00" stroke-width="0.7"/>
<text transform="translate(266.7,465.0) rotate(-45)" text-anchor="end" font-size="6.2" fill="#666">8 AM</text>
<rect x="277.12" y="426.26" width="8.60" height="28.84" fill="#ff7e00" stroke="#3a1c00" stroke-width="0.7"/>
<text transform="translate(283.6,465.0) rotate(-45)" text-anchor="end" font-size="6.2" fill="#666">9 AM</text>
<rect x="294.07" y="423.79" width="8.60" height="31.31" fill="#ff0000" stroke="#3a1c00" stroke-width="0.7"/>
<text transform="translate(300.6,465.0) rotate(-45)" text-anchor="end" font-size="6.2" fill="#666">10 AM</text>
<rect x="311.02" y="423.17" width="8.60" height="31.93" fill="#ff0000" stroke="#3a1c00" stroke-width="0.7"/>
<text transform="translate(317.5,465.0) rotate(-45)" text-anchor="end" font-size="6.2" fill="#666">11 AM</text>
<rect x="327.98" y="423.17" width="8.60" height="31.93" fill="#ff0000" stroke="#3a1c00" stroke-width="0.7"/>
<text transform="translate(334.5,465.0) rotate(-45)" text-anchor="end" font-size="6.2" fill="#666">12 PM</text>
<rect x="344.93" y="422.55" width="8.60" height="32.55" fill="#ff0000" stroke="#3a1c00" stroke-width="0.7"/>
<text transform="translate(351.4,465.0) rotate(-45)" text-anchor="end" font-size="6.2" fill="#666">1 PM</text>
<rect x="361.88" y="422.55" width="8.60" height="32.55" fill="#ff0000" stroke="#3a1c00" stroke-width="0.7"/>
<text transform="translate(368.4,465.0) rotate(-45)" text-anchor="end" font-size="6.2" fill="#666">2 PM</text>
<rect x="378.82" y="422.55" width="8.60" height="32.55" fill="#ff0000" stroke="#3a1c00" stroke-width="0.7"/>
<text transform="translate(385.3,465.0) rotate(-45)" text-anchor="end" font-size="6.2" fill="#666">3 PM</text>
<rect x="395.77" y="421.73" width="8.60" height="33.37" fill="#ff0000" stroke="#3a1c00" stroke-width="0.7"/>
<text transform="translate(402.3,465.0) rotate(-45)" text-anchor="end" font-size="6.2" fill="#666">4 PM</text>
<rect x="412.73" y="420.49" width="8.60" height="34.61" fill="#ff0000" stroke="#3a1c00" stroke-width="0.7"/>
<text transform="translate(419.2,465.0) rotate(-45)" text-anchor="end" font-size="6.2" fill="#666">5 PM</text>
<rect x="429.68" y="420.08" width="8.60" height="35.02" fill="#ff0000" stroke="#3a1c00" stroke-width="0.7"/>
<text transform="translate(436.2,465.0) rotate(-45)" text-anchor="end" font-size="6.2" fill="#666">6 PM</text>
<rect x="446.62" y="419.67" width="8.60" height="35.43" fill="#ff0000" stroke="#3a1c00" stroke-width="0.7"/>
<text transform="translate(453.1,465.0) rotate(-45)" text-anchor="end" font-size="6.2" fill="#666">7 PM</text>
</svg></div>
<div id="cond" class="abs">
 <div class="h abs"><div class="abs" style="left:0;width:100%;top:3.8px;font-size:8.6px;line-height:10px">Current Conditions</div><div class="abs" style="left:0;width:100%;top:16px;font-size:6.8px;line-height:10px">observed at</div><div class="abs" style="left:0;width:100%;top:27.2px;font-size:8.5px;line-height:10px;white-space:nowrap">Mar 16, 2021 7:00 PM (LT)</div></div>
 <div class="r abs"><div style="margin-top:8.5px">172 AQI</div><div>Unhealthy</div><div>PM2.5</div></div>
 <div class="m abs"><div style="text-align:center;font-weight:bold;font-size:6.7px;line-height:10px;margin-top:5.2px;color:#333">Health Message</div>
 <div style="font-size:6.85px;line-height:12.1px;margin:2.5px 0 0 2.6px;white-space:nowrap;color:#555">Everyone may begin to experience health<br>effects when AQI values are between 151<br>and 200. Members of sensitive groups may<br>experience more serious health effects.</div></div>
</div>
<div id="cnote" class="abs">Note: Values above 500 are considered Beyond the</div>
</body></html>
